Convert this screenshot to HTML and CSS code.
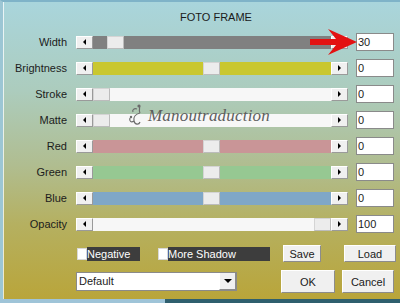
FILE: index.html
```html
<!DOCTYPE html>
<html lang="en">
<head>
    <meta charset="UTF-8">
    <title>Foto Frame</title>
    <link rel="stylesheet" href="styles.css">
</head>
<body>
    <div class="screen">
        <div class="dialog">
            <div class="title">FOTO FRAME</div>

            <div class="rows">
                <div class="row">
                    <label>Width</label>
                    <div class="slider">
                        <span class="arrow left"></span>
                        <div class="track gray"><span class="thumb" style="margin-left: 14px"></span></div>
                        <span class="arrow right"></span>
                    </div>
                    <div class="value">30</div>
                </div>
                <div class="row">
                    <label>Brightness</label>
                    <div class="slider">
                        <span class="arrow left"></span>
                        <div class="track yellow"><span class="thumb" style="margin-left: 110px"></span></div>
                        <span class="arrow right"></span>
                    </div>
                    <div class="value">0</div>
                </div>
                <div class="row">
                    <label>Stroke</label>
                    <div class="slider">
                        <span class="arrow left"></span>
                        <div class="track white"><span class="thumb" style="margin-left: 0"></span></div>
                        <span class="arrow right"></span>
                    </div>
                    <div class="value">0</div>
                </div>
                <div class="row">
                    <label>Matte</label>
                    <div class="slider">
                        <span class="arrow left"></span>
                        <div class="track white"><span class="thumb" style="margin-left: 0"></span></div>
                        <span class="arrow right"></span>
                    </div>
                    <div class="value">0</div>
                </div>
                <div class="row">
                    <label>Red</label>
                    <div class="slider">
                        <span class="arrow left"></span>
                        <div class="track red"><span class="thumb" style="margin-left: 110px"></span></div>
                        <span class="arrow right"></span>
                    </div>
                    <div class="value">0</div>
                </div>
                <div class="row">
                    <label>Green</label>
                    <div class="slider">
                        <span class="arrow left"></span>
                        <div class="track green"><span class="thumb" style="margin-left: 110px"></span></div>
                        <span class="arrow right"></span>
                    </div>
                    <div class="value">0</div>
                </div>
                <div class="row">
                    <label>Blue</label>
                    <div class="slider">
                        <span class="arrow left"></span>
                        <div class="track blue"><span class="thumb" style="margin-left: 110px"></span></div>
                        <span class="arrow right"></span>
                    </div>
                    <div class="value">0</div>
                </div>
                <div class="row">
                    <label>Opacity</label>
                    <div class="slider">
                        <span class="arrow left"></span>
                        <div class="track white"><span class="thumb" style="margin-left: 221px"></span></div>
                        <span class="arrow right"></span>
                    </div>
                    <div class="value">100</div>
                </div>
            </div>

            <div class="options">
                <div class="check negative"><span class="box"></span><span class="check-label">Negative</span></div>
                <div class="check shadow"><span class="box"></span><span class="check-label">More Shadow</span></div>
                <button class="btn save">Save</button>
                <button class="btn load">Load</button>
            </div>

            <div class="actions">
                <div class="select">
                    <span class="select-text">Default</span>
                    <span class="select-btn"></span>
                </div>
                <button class="btn ok">OK</button>
                <button class="btn cancel">Cancel</button>
            </div>

            <div class="watermark">
                <svg width="22" height="26" viewBox="0 0 22 26">
                    <path d="M14 2 C16 5 13 7 15 10 M15 10 C11 11 8 14 9 18 C10 22 14 22 15 19 M9 18 C6 20 4 18 5 15 M12 6 C9 5 7 7 8 9" fill="none" stroke="#6b6b6b" stroke-width="1.2"/>
                    <circle cx="14" cy="3" r="1.6" fill="#6b6b6b"/>
                    <circle cx="6" cy="14" r="1.2" fill="#6b6b6b"/>
                </svg>
                <span class="watermark-text">Manoutraduction</span>
            </div>

            <svg class="pointer" width="60" height="30" viewBox="0 0 60 30">
                <polygon points="2,11 28,11 20,1 49,14 20,27 28,17 2,17" fill="#e31212"/>
            </svg>
        </div>
        <div class="taskbar">
            <span class="taskbar-light"></span>
            <span class="taskbar-dark"></span>
        </div>
    </div>
</body>
</html>
```

FILE: styles.css
```css
* {
    box-sizing: border-box;
}
body {
    margin: 0;
    font-family: 'Liberation Sans', Arial, sans-serif;
    font-size: 11px;
    color: #1c1c1c;
}
.screen {
    width: 400px;
    height: 303px;
    display: flex;
    flex-direction: column;
    overflow: hidden;
}
.dialog {
    position: relative;
    flex: 1;
    border-top: 2px solid #7fb3c8;
    border-left: 3px solid #9cc6d4;
    background: linear-gradient(to bottom, #a9d5dc 0%, #acccbd 30%, #b0bd90 55%, #b5b060 75%, #b9a53a 100%);
    box-shadow: inset 1px 0 0 rgba(255, 255, 255, 0.75);
}
.title {
    height: 31px;
    padding: 9px 0 0 177px;
    font-size: 11px;
    color: #1a1a1a;
}
.rows {
    display: flex;
    flex-direction: column;
    gap: 8px;
}
.row {
    display: flex;
    align-items: center;
    height: 18px;
}
.row label {
    width: 64px;
    text-align: right;
    margin-right: 9px;
}
.slider {
    display: flex;
    width: 272px;
    height: 13px;
}
.arrow {
    width: 17px;
    height: 13px;
    background: #f0f0f0;
    border-top: 1px solid #fff;
    border-left: 1px solid #fff;
    border-right: 1px solid #9a9a9a;
    border-bottom: 1px solid #9a9a9a;
    display: flex;
    align-items: center;
    justify-content: center;
}
.arrow::after {
    content: '';
    border-top: 3px solid transparent;
    border-bottom: 3px solid transparent;
}
.arrow.left::after {
    border-right: 3px solid #000;
}
.arrow.right::after {
    border-left: 3px solid #000;
}
.track {
    flex: 1;
    display: flex;
}
.track.gray { background: #808080; }
.track.yellow { background: #c9c72f; }
.track.white { background: #f7f7f7; }
.track.red { background: #c99597; }
.track.green { background: #96c892; }
.track.blue { background: #7fa7c7; }
.thumb {
    width: 17px;
    height: 13px;
    background: #ececec;
    border: 1px solid #d4d4d4;
    border-right-color: #bcbcbc;
    border-bottom-color: #bcbcbc;
}
.value {
    width: 38px;
    height: 18px;
    margin-left: 8px;
    background: #fff;
    border: 1px solid #8a8a8a;
    padding: 2px 0 0 1px;
    line-height: 13px;
}
.options {
    display: flex;
    align-items: center;
    height: 17px;
    margin-top: 12px;
    padding-left: 74px;
}
.check {
    display: flex;
    align-items: center;
    height: 14px;
}
.check .box {
    width: 10px;
    height: 12px;
    background: #fff;
    border: 1px solid #d8d8d8;
}
.check-label {
    height: 14px;
    background: #3d3d3d;
    color: #fff;
    line-height: 14px;
}
.negative .check-label {
    width: 53px;
}
.shadow {
    margin-left: 18px;
}
.shadow .check-label {
    width: 102px;
}
.btn {
    font-family: 'Liberation Sans', Arial, sans-serif;
    font-size: 11px;
    color: #1a1a1a;
    background: #f0f0f0;
    border: 1px solid #8c8c8c;
    border-top-color: #fff;
    border-left-color: #fff;
    padding: 0;
    margin: 0;
}
.save {
    width: 38px;
    height: 17px;
    margin-left: 13px;
}
.load {
    width: 52px;
    height: 17px;
    margin-left: 23px;
}
.actions {
    display: flex;
    align-items: center;
    height: 23px;
    margin-top: 8px;
    padding-left: 73px;
}
.select {
    display: flex;
    width: 161px;
    height: 19px;
    background: #fff;
    border: 1px solid #8a8a8a;
}
.select-text {
    flex: 1;
    padding: 2px 0 0 2px;
}
.select-btn {
    width: 17px;
    background: #f0f0f0;
    border-left: 1px solid #fff;
    border-right: 1px solid #8c8c8c;
    border-bottom: 1px solid #8c8c8c;
    display: flex;
    align-items: center;
    justify-content: center;
}
.select-btn::after {
    content: '';
    border-left: 4px solid transparent;
    border-right: 4px solid transparent;
    border-top: 4px solid #000;
}
.ok {
    width: 54px;
    height: 23px;
    margin-left: 44px;
}
.cancel {
    width: 52px;
    height: 23px;
    margin-left: 7px;
}
.watermark {
    position: absolute;
    left: 122px;
    top: 101px;
    display: flex;
    align-items: center;
    gap: 1px;
}
.watermark-text {
    font-family: 'Liberation Serif', serif;
    font-style: italic;
    font-size: 17px;
    color: #5e5e5e;
    letter-spacing: 0.2px;
}
.pointer {
    position: absolute;
    left: 305px;
    top: 26px;
}
.taskbar {
    display: flex;
    height: 4px;
}
.taskbar-light {
    width: 165px;
    background: #9fc4d8;
}
.taskbar-dark {
    flex: 1;
    background: #2f5f6e;
}
```
